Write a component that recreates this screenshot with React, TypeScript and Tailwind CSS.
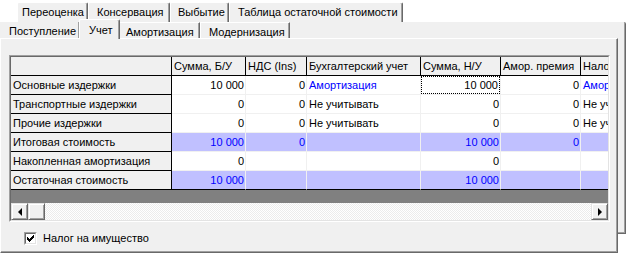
import React from "react";

type Cell = { t?: string; blue?: boolean; left?: boolean; focus?: boolean };
type Row = { label: string; hl?: boolean; cells: Cell[] };

const colW = ["w-[74px]", "w-[61px]", "w-[114px]", "w-[80px]", "w-[80px]", "flex-1 min-w-0"];

const headers = ["Сумма, Б/У", "НДС (Ins)", "Бухгалтерский учет", "Сумма, Н/У", "Амор. премия", "Налог на имущество"];

const rows: Row[] = [
  {
    label: "Основные издержки",
    cells: [
      { t: "10 000" },
      { t: "0" },
      { t: "Амортизация", blue: true, left: true },
      { t: "10 000", focus: true },
      { t: "0" },
      { t: "Амортизация", blue: true, left: true },
    ],
  },
  {
    label: "Транспортные издержки",
    cells: [{ t: "0" }, { t: "0" }, { t: "Не учитывать", left: true }, { t: "0" }, { t: "0" }, { t: "Не учитывать", left: true }],
  },
  {
    label: "Прочие издержки",
    cells: [{ t: "0" }, { t: "0" }, { t: "Не учитывать", left: true }, { t: "0" }, { t: "0" }, { t: "Не учитывать", left: true }],
  },
  {
    label: "Итоговая стоимость",
    hl: true,
    cells: [{ t: "10 000", blue: true }, { t: "0", blue: true }, {}, { t: "10 000", blue: true }, { t: "0", blue: true }, {}],
  },
  {
    label: "Накопленная амортизация",
    cells: [{ t: "0" }, {}, {}, { t: "0" }, {}, {}],
  },
  {
    label: "Остаточная стоимость",
    hl: true,
    cells: [{ t: "10 000", blue: true }, {}, {}, { t: "10 000", blue: true }, {}, {}],
  },
];

const raised =
  "bg-[#f0f0f0] border border-t-[#e3e3e3] border-l-[#e3e3e3] border-r-[#696969] border-b-[#696969] shadow-[inset_1px_1px_0_#fff,inset_-1px_-1px_0_#a0a0a0]";

const Tab = ({ label, className }: { label: string; className: string }) => (
  <div
    className={
      "h-[20px] bg-[#f0f0f0] border-l border-t border-l-white border-t-white border-r border-r-[#696969] shadow-[inset_-1px_0_0_#a0a0a0] rounded-t-[2px] flex items-center whitespace-nowrap " +
      className
    }
  >
    {label}
  </div>
);

const Grid = () => (
  <div className="w-[601px] h-[167px] border border-t-[#a0a0a0] border-l-[#a0a0a0] border-r-white border-b-white">
    <div className="h-full overflow-hidden border border-t-[#696969] border-l-[#696969] border-r-[#e3e3e3] border-b-[#e3e3e3] flex flex-col">
      {/* header row */}
      <div className="flex h-[19px] shrink-0">
        <div className="w-[161px] shrink-0 bg-[#f0f0f0] border-r border-b border-black" />
        {headers.map((h, i) => (
          <div
            key={i}
            className={colW[i] + " shrink-0 bg-[#f0f0f0] border-b border-black pl-[2px] flex items-center whitespace-nowrap overflow-hidden " + (i < 5 ? "border-r" : "")}
          >
            {h}
          </div>
        ))}
      </div>
      {rows.map((r, ri) => {
        const last = ri === rows.length - 1;
        return (
          <div key={ri} className="flex h-[19px] shrink-0">
            <div className="w-[161px] shrink-0 bg-[#f0f0f0] border-r border-b border-black pl-[2px] flex items-center whitespace-nowrap">
              {r.label}
            </div>
            {r.cells.map((c, ci) => (
              <div
                key={ci}
                className={
                  colW[ci] +
                  " shrink-0 border-b overflow-hidden whitespace-nowrap " +
                  (ci < 5 ? "border-r " : "") +
                  (last ? "border-b-black border-r-[#f0f0f0] " : "border-[#f0f0f0] ") +
                  (r.hl ? "bg-[#c0c0ff] " : "bg-white ") +
                  (c.blue ? "text-[#0000ff]" : "text-black")
                }
              >
                <div
                  className={
                    "h-full flex items-center " +
                    (c.left ? "justify-start pl-[2px] " : "justify-end pr-[1px] ") +
                    (c.focus ? "border border-dotted border-black" : "")
                  }
                >
                  {c.t}
                </div>
              </div>
            ))}
          </div>
        );
      })}
      <div className="flex-1 bg-[#808080]" />
      {/* horizontal scrollbar */}
      <div className="flex h-[17px] shrink-0">
        <div className={"w-[17px] flex items-center justify-center " + raised}>
          <div className="w-0 h-0 border-y-[4px] border-y-transparent border-r-[4px] border-r-black" />
        </div>
        <div className={"w-[17px] " + raised} />
        <div className="flex-1 bg-[repeating-conic-gradient(#ffffff_0_25%,#ececec_0_50%)] bg-[length:2px_2px]" />
        <div className={"w-[17px] flex items-center justify-center " + raised}>
          <div className="w-0 h-0 border-y-[4px] border-y-transparent border-l-[4px] border-l-black" />
        </div>
      </div>
    </div>
  </div>
);

export default function App() {
  return (
    <div className="w-[627px] h-[255px] bg-white overflow-hidden font-['Liberation_Sans',Arial,sans-serif] text-[11px] leading-[13px] text-black">
      {/* first row of tabs */}
      <div className="h-[22px] flex items-end pl-[17px]">
        <Tab label="Переоценка" className="w-[71px] pl-[4px]" />
        <Tab label="Консервация" className="w-[82px] pl-[8px]" />
        <Tab label="Выбытие" className="w-[59px] pl-[7px]" />
        <Tab label="Таблица остаточной стоимости" className="w-[174px] pl-[8px]" />
      </div>
      <div className="flex">
        <div className="w-[618px]">
          {/* second row of tabs */}
          <div className="h-[16px] bg-[#f0f0f0] flex items-end">
            <div className="w-[80px] h-[16px] pl-[9px] pt-[3px] border-r border-r-[#696969] shadow-[inset_-1px_0_0_#a0a0a0] whitespace-nowrap">
              Поступление
            </div>
            <div className="relative z-10 w-[41px] h-[20px] -mb-[1px] -ml-[1px] bg-[#f0f0f0] border-l border-t border-l-white border-t-white border-r border-r-[#696969] shadow-[inset_-1px_0_0_#a0a0a0] rounded-t-[2px] pl-[9px] pt-[4px] whitespace-nowrap">
              Учет
            </div>
            <div className="w-[80px] h-[16px] pl-[6px] pt-[3px] border-t border-t-white border-r border-r-[#696969] shadow-[inset_-1px_0_0_#a0a0a0] whitespace-nowrap">
              Амортизация
            </div>
            <div className="w-[90px] h-[16px] pl-[8px] pt-[3px] border-l border-t border-white border-r border-r-[#696969] shadow-[inset_-1px_0_0_#a0a0a0] whitespace-nowrap">
              Модернизация
            </div>
          </div>
          {/* page */}
          <div className="h-[215px] bg-[#f0f0f0] border-l border-t border-l-white border-t-white border-r border-b border-r-[#696969] border-b-[#696969] shadow-[inset_-1px_-1px_0_#a0a0a0] pl-[8px] pt-[16px]">
            <Grid />
            <div className="flex items-center mt-[10px] ml-[15px]">
              <div className="w-[13px] h-[13px] border border-t-[#a0a0a0] border-l-[#a0a0a0] border-r-white border-b-white">
                <div className="w-full h-full bg-white border border-t-[#696969] border-l-[#696969] border-r-[#e3e3e3] border-b-[#e3e3e3] flex items-center justify-center">
                  <svg width="7" height="7" viewBox="0 0 7 7">
                    <path d="M0 2h1v1h1v1h1V3h1V2h1V1h1V0h1v3H6v1H5v1H4v1H3v1H2V6H1V5H0z" fill="#000" />
                  </svg>
                </div>
              </div>
              <span className="ml-[6px] whitespace-nowrap">Налог на имущество</span>
            </div>
          </div>
        </div>
        <div className="w-[8px] h-[212px] bg-[#f0f0f0] border-r border-b border-r-[#696969] border-b-[#696969] shadow-[inset_-1px_-1px_0_#a0a0a0] rounded-tr-[2px]" />
      </div>
    </div>
  );
}
